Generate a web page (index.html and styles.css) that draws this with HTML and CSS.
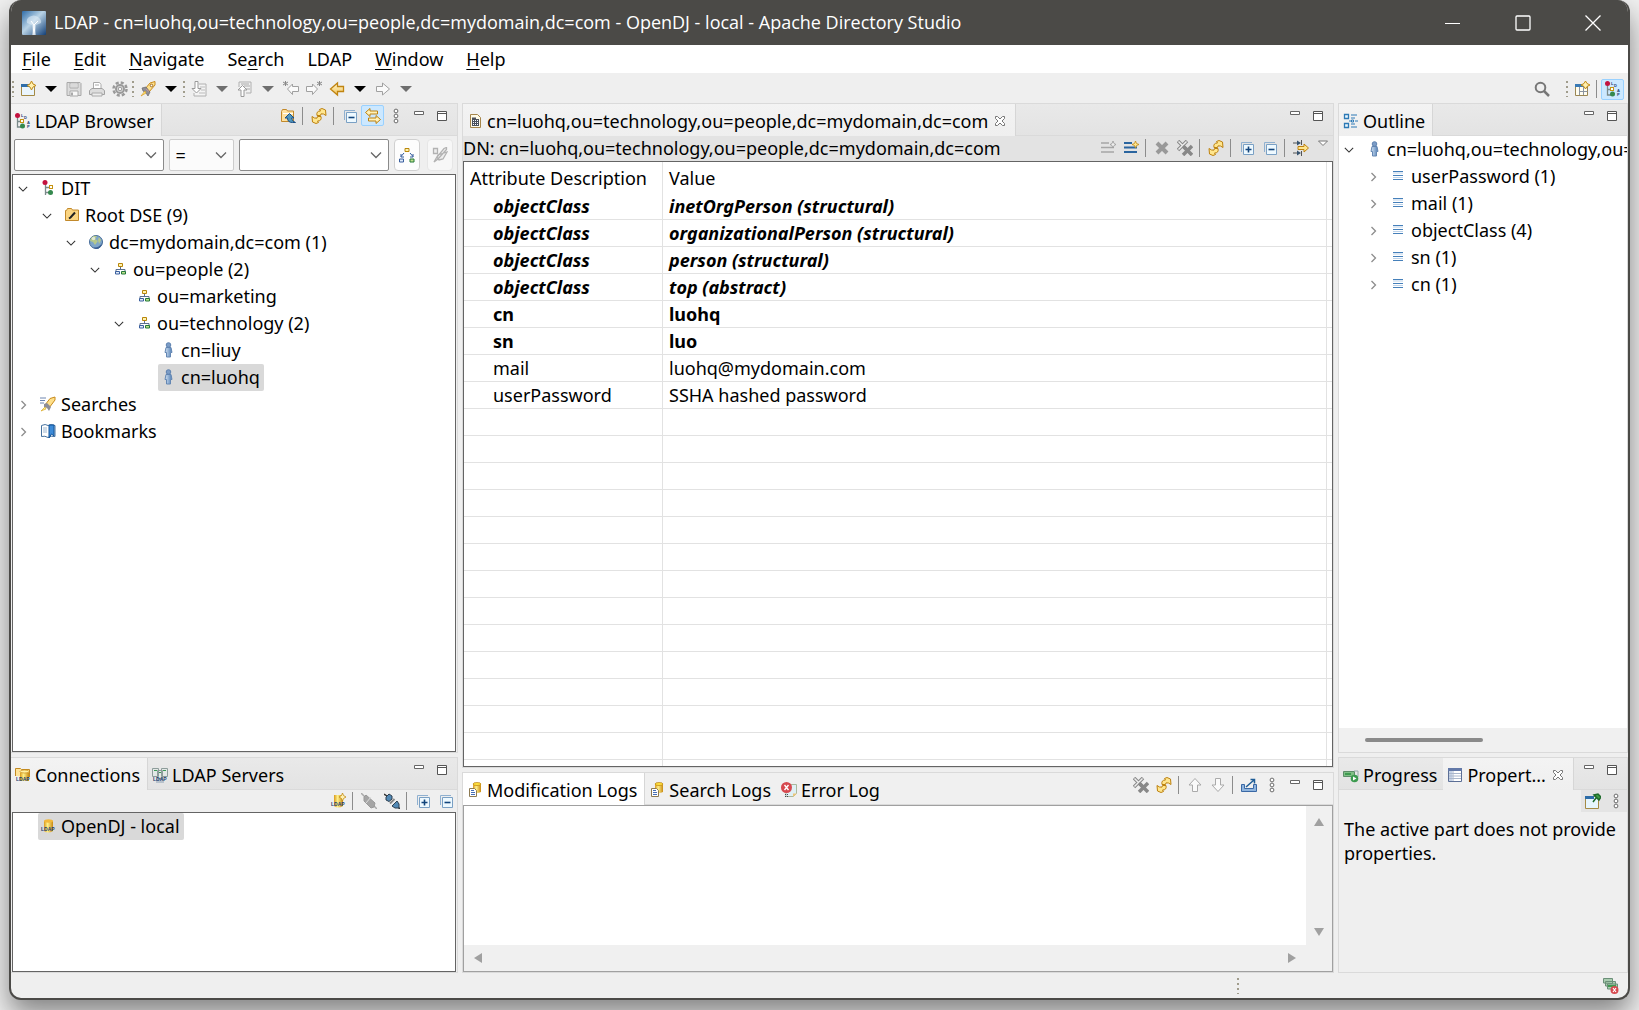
FILE: index.html
```html
<!DOCTYPE html>
<html lang="en">
<head>
    <meta charset="UTF-8">
    <meta name="viewport" content="width=device-width, initial-scale=1.0">
    <title>LDAP - Apache Directory Studio</title>
    <link rel="stylesheet" href="styles.css">
</head>
<body>
    <!-- icon sprite -->
    <svg class="sprite" aria-hidden="true">
        <defs>
            <linearGradient id="gold" x1="0" y1="0" x2="0" y2="1"><stop offset="0" stop-color="#fff6d0"/><stop offset="1" stop-color="#f3c55a"/></linearGradient>
            <linearGradient id="sky" x1="0" y1="0" x2="1" y2="1"><stop offset="0" stop-color="#2f6ca8"/><stop offset=".45" stop-color="#b9d3e6"/><stop offset="1" stop-color="#123f77"/></linearGradient>
            <linearGradient id="blue" x1="0" y1="0" x2="1" y2="0"><stop offset="0" stop-color="#d5e4f4"/><stop offset="1" stop-color="#4f7db4"/></linearGradient>
            <linearGradient id="barrel" x1="0" y1="0" x2="1" y2="0"><stop offset="0" stop-color="#d99a1c"/><stop offset=".4" stop-color="#fff08a"/><stop offset="1" stop-color="#c98a12"/></linearGradient>
        </defs>
        <symbol id="i-app" viewBox="0 0 24 24"><rect width="24" height="24" rx="1" fill="url(#sky)"/><path d="M7 6q5-3 9 0t3 6l-5 2-1 10h-2l-1-10-5-2q-1-4 2-6z" fill="#e4eff7" opacity=".55"/><path d="M11 24l1-10-3-4M13 24l-1-10 4-4" stroke="#fff" fill="none"/></symbol>
        <symbol id="i-new" viewBox="0 0 16 16"><path d="M1.500 3.500h13v11h-13z" fill="#eaf5fd" stroke="#a48a45"/><path d="M1 3h9v3H1z" fill="#2e6da8"/><path d="M11.500 0l1.500 3 3 1.500-3 1.500-1.500 3-1.500-3-3-1.500 3-1.500z" fill="#fff0b0" stroke="#c28a14"/></symbol>
        <symbol id="i-save" viewBox="0 0 16 16"><path d="M1 1.500h13l1 1v12H1z" fill="#dcdcdc" stroke="#a9a9a9"/><path d="M4 2h8v5H4zM4 10h8v5H4z" fill="#f8f8f8" stroke="#aaa"/><path d="M5 11.500h2v3H5z" fill="#aaa"/><path d="M5 4h6M5 6h6" stroke="#bbb"/></symbol>
        <symbol id="i-print" viewBox="0 0 16 16"><path d="M4.500 7V1.500h6l1.500 2V7" fill="#fff" stroke="#aaa"/><path d="M3 7.500h10l2.500 2v4H.500v-4z" fill="#ddd" stroke="#a2a2a2"/><path d="M3 12h10v3H3z" fill="#eee" stroke="#aaa"/><path d="M6 4h4" stroke="#aaa"/></symbol>
        <symbol id="i-gear" viewBox="0 0 16 16"><circle cx="8" cy="8" r="6.500" fill="none" stroke="#999" stroke-width="2.500" stroke-dasharray="3 2.100"/><circle cx="8" cy="8" r="4" fill="#ddd" stroke="#999" stroke-width="2"/><circle cx="8" cy="8" r="1.800" fill="#f6f6f6" stroke="#999"/></symbol>
        <symbol id="i-rocket" viewBox="0 0 16 16"><path d="M5 8l5-6 5-1.500V4l-6 7z" fill="#ffe08a" stroke="#c78a1c"/><path d="M2 7l4-1 4 5-2 4-2-3-3-2z" fill="#8e8e96" stroke="#66646c" stroke-width=".7"/><path d="M5 10l-4 5 5-3z" fill="#ffed76" stroke="#d99a28" stroke-width=".7"/><path d="M6 8l3 2.500" stroke="#c99"/><circle cx="11.500" cy="4.500" r="1.300" fill="#fff" stroke="#9c6a23"/></symbol>
        <symbol id="i-import" viewBox="0 0 16 16"><path d="M8 3h7v12H3v-3" fill="#f4f4f4" stroke="#b0b0b0"/><path d="M4 .500h3v7h3L5.500 12 1 7.500h3z" fill="#fff" stroke="#999"/><path d="M9 6h5M10 9h4M8 12h6" stroke="#bbb"/></symbol>
        <symbol id="i-export" viewBox="0 0 16 16"><path d="M2 6V1h12v11H9" fill="#f0f0f0" stroke="#b0b0b0"/><path d="M4 3h8M7 5h6M9 8h4" stroke="#aaa"/><path d="M4 15.500h3V9h3L5.500 4.500 1 9h3z" fill="#fff" stroke="#999"/></symbol>
        <symbol id="i-back-star" viewBox="0 0 16 16"><path d="M15.500 5.500v5h-6v3L4.500 8l5-5v2.500z" fill="#fafafa" stroke="#a0a0a0"/><path d="M2.500 0v5M0 1l5 3M5 1L0 4" stroke="#888"/></symbol>
        <symbol id="i-fwd-star" viewBox="0 0 16 16"><path d="M.500 5.500v5h6v3l5-5.500-5-5v2.500z" fill="#fafafa" stroke="#a0a0a0"/><path d="M13.500 0v5M11 1l5 3M16 1l-5 3" stroke="#888"/></symbol>
        <symbol id="i-back" viewBox="0 0 16 16"><path d="M14.500 5.500v5h-6v3.500L1.500 8l7-6v3.500z" fill="url(#gold)" stroke="#c08410" stroke-width="1.300"/></symbol>
        <symbol id="i-fwd" viewBox="0 0 16 16"><path d="M1.500 5.500v5h6v3.500l7-6-7-6v3.500z" fill="#fafafa" stroke="#a0a0a0"/></symbol>
        <symbol id="i-tri" viewBox="0 0 12 6"><path d="M0 0h12L6 6z" fill="currentColor"/></symbol>
        <symbol id="i-search" viewBox="0 0 16 16"><circle cx="6.500" cy="6.500" r="4.800" fill="none" stroke="#777" stroke-width="2"/><path d="M10 10l5 5" stroke="#777" stroke-width="2.500"/></symbol>
        <symbol id="i-persp" viewBox="0 0 16 16"><path d="M1.500 3.500h12v11h-12z" fill="#fffdf0" stroke="#9a8653"/><path d="M1 3h9v3H1z" fill="#3a7ab5"/><path d="M5.500 6v8M5.500 10.500h8M9.500 6v8" stroke="#8b94a0"/><path d="M11.500 0l1.500 2.500L16 4l-3 1.500L11.500 8 10 5.500 7 4l3-1.500z" fill="#fff0b0" stroke="#c28a14"/></symbol>
        <symbol id="i-browser" viewBox="0 0 16 16"><path d="M2.500 4v10H7M2.500 8.500h4" fill="none" stroke="#7a8a8a" stroke-width="1.300"/><circle cx="2.500" cy="2.500" r="2.500" fill="#c3123f"/><rect x="5.500" y="6.500" width="3" height="3" fill="#fff" stroke="#c79410"/><circle cx="7.500" cy="13" r="2.500" fill="#35894e"/><text x="6" y="4" class="mini">L</text><text x="9" y="6" class="mini">D</text><text x="12" y="10.600" class="mini">A</text><text x="12" y="15.200" class="mini">P</text></symbol>
        <symbol id="i-folder-up" viewBox="0 0 16 16"><path d="M1.500 13.500v-10l1-2h4l1 1.500h6v10.500z" fill="#ffe2a0" stroke="#c2892b"/><path d="M3 5.500h10" stroke="#fff"/><path d="M9.500 5.500L5 10h2.500q0 4.500 5 4.500h3q-3.500-1-4-4.500H14z" fill="#4f97bd" stroke="#1b4f86"/></symbol>
        <symbol id="i-refresh" viewBox="0 0 16 16"><g fill="#ffe68e" stroke="#bd810e"><path id="swirl" d="M6 7.500Q5 3 9.500 3L8.500 1.500 11 .500 14.500 2l.5 5.500L12.500 6Q9 5 9.500 7.500z"/><use href="#swirl" transform="rotate(180 8 8)"/></g></symbol>
        <symbol id="i-collapse" viewBox="0 0 16 16"><path d="M2.500 12V2.500H13" fill="none" stroke="#8fb0d0"/><path d="M4.500 4.500h10v10h-10z" fill="#eef9ff" stroke="#7aa0c4"/><path d="M6.500 9.500h6" stroke="#12457c" stroke-width="1.600"/></symbol>
        <symbol id="i-expand" viewBox="0 0 16 16"><path d="M2.500 12V2.500H13" fill="none" stroke="#8fb0d0"/><path d="M4.500 4.500h10v10h-10z" fill="#eef9ff" stroke="#7aa0c4"/><path d="M6.500 9.500h6M9.500 6.500v6" stroke="#12457c" stroke-width="1.600"/></symbol>
        <symbol id="i-link" viewBox="0 0 16 16"><path d="M.500 4.500L5 .500v2.500h7.500v3H5V8.500z" fill="#fff1b8" stroke="#bd810e"/><path d="M15.500 11.500L11 7.500V10H3.500v3H11v2.500z" fill="#fff1b8" stroke="#bd810e"/></symbol>
        <symbol id="i-dots" viewBox="0 0 16 16"><g fill="#fff" stroke="#6b6b6b"><circle cx="8" cy="3" r="1.900"/><circle cx="8" cy="8" r="1.900"/><circle cx="8" cy="13" r="1.900"/></g></symbol>
        <symbol id="i-min" viewBox="0 0 16 16"><path d="M3.500 3.500h9v3h-9z" fill="#fff" stroke="#666"/></symbol>
        <symbol id="i-max" viewBox="0 0 16 16"><path d="M3.500 3.500h9v9h-9z" fill="#fff" stroke="#555"/><path d="M3.500 5.500h9" stroke="#555"/></symbol>
        <symbol id="i-down" viewBox="0 0 12 8"><path d="M1 1.500l5 5 5-5" fill="none" stroke="currentColor" stroke-width="1.300"/></symbol>
        <symbol id="i-right" viewBox="0 0 10 10"><path d="M3.500 1l4 4-4 4" fill="none" stroke="currentColor" stroke-width="1.300"/></symbol>
        <symbol id="i-hier" viewBox="0 0 16 16"><path d="M6 1.500h4v3H6z" fill="#fff3b0" stroke="#b8860b"/><path d="M.500 12h4v3h-4z" fill="#dfeaf8" stroke="#3a5f9e"/><path d="M11 12h4v3h-4z" fill="#bfe08a" stroke="#22783a"/><path d="M5 6L2 9.500M2 7v3h3M11 6l3 3.500M14 7v3h-3" fill="none" stroke="#30599a"/></symbol>
        <symbol id="i-edit-off" viewBox="0 0 16 16"><path d="M1.500 1.500h4v5h-4zM6 8l-4 7 4-3 8.500-9.500v-2l-2.500 1L5 10l2 3 4-1 4-7z" fill="#eee" stroke="#b2b2b2" stroke-width="1.300"/></symbol>
        <symbol id="i-dit" viewBox="0 0 16 16"><path d="M5.500 4v11M5.500 7.500h4M5.500 12.500h4" fill="none" stroke="#7a8a8a" stroke-width="1.300"/><circle cx="5" cy="2.500" r="2.500" fill="#c3123f"/><rect x="9.500" y="5.500" width="3" height="3" fill="#fff" stroke="#c79410"/><circle cx="10.500" cy="12.500" r="2.500" fill="#35894e"/></symbol>
        <symbol id="i-dse" viewBox="0 0 16 16"><path d="M1.500 13.500V3.500h1l1-2h4l1 1.500h6v10.500z" fill="#fbd582" stroke="#c2892b"/><path d="M5 11.500l1.500-1L11 5.500" stroke="#222" stroke-width="2" fill="none"/></symbol>
        <symbol id="i-globe" viewBox="0 0 16 16"><circle cx="8" cy="8" r="6.500" fill="#7fa6c9" stroke="#456b98"/><path d="M3 4q3-3 6-2l-2 3 3 2-3 4-2-3-3-1zM11 3l2 3-2 4-1-4z" fill="#b6c98a"/><path d="M4 13q6 2 10-4-1 6-6 6z" fill="#3b5f93"/><circle cx="5.500" cy="4.500" r="1.800" fill="#fff" opacity=".6"/></symbol>
        <symbol id="i-ou" viewBox="0 0 16 16"><path d="M8.500 5v3M4 11V8.500h9V11" fill="none" stroke="#5a6f8e"/><path d="M6.500 2.500h4v3h-4z" fill="#fff3b0" stroke="#b8860b"/><path d="M3.500 10.500h4v2.500h-4z" fill="#dfeaf8" stroke="#3a5f9e"/><path d="M9.500 10.500h4v2.500h-4z" fill="#bfe08a" stroke="#22783a"/></symbol>
        <symbol id="i-person" viewBox="0 0 16 16"><path d="M6 5.500h5l1 5h-1.500v4.500h-4V10.500H5z" fill="url(#blue)" stroke="#6487b3"/><circle cx="8.500" cy="3" r="2.300" fill="#7b9cc6" stroke="#5d81b0"/></symbol>
        <symbol id="i-searches" viewBox="0 0 16 16"><path d="M0 2h6M0 4.500h5M0 7h4" stroke="#6e86b0"/><path d="M5 9l5-6.500 5-1.500V4L9 12z" fill="#ffe08a" stroke="#c78a1c"/><path d="M4 8l3-1 4 4-2 4-2-3-3-1z" fill="#8e8e96"/><path d="M5 11l-4 4 5-2z" fill="#fff38a" stroke="#d9a828" stroke-width=".7"/></symbol>
        <symbol id="i-book" viewBox="0 0 16 16"><path d="M1.500 2.500q4-2 6.500 0 3-2 7 0v11q-4-1-7 1-3-2-6.500-1z" fill="#fff" stroke="#47729f"/><path d="M3 5h4M3 7h4M3 9h4" stroke="#9db6cf"/><path d="M9 2h5v11l-2.500-2L9 15z" fill="#3d8bd8" stroke="#12549a"/></symbol>
        <symbol id="i-entry" viewBox="0 0 16 16"><path d="M3.500 1.500h7l3 3v10h-10z" fill="#fffbe8" stroke="#a5854a"/><path d="M5 4.500h4v1.500h3v7H5z" fill="#4a505c"/><path d="M6 7h1v1H6zM8 7h1v1H8zM10 7h1v1h-1zM6 9h1v1H6zM8 9h1v1H8zM10 9h1v1h-1zM6 11h1v1H6zM8 11h1v1H8zM10 11h1v1h-1z" fill="#fff"/></symbol>
        <symbol id="i-close" viewBox="0 0 16 16"><path d="M3.500 3.500h2L8 6l2.500-2.500h2v2L10 8l2.500 2.500v2h-2L8 10l-2.500 2.500h-2v-2L6 8 3.500 5.500z" fill="#fff" stroke="#777"/></symbol>
        <symbol id="i-val-off" viewBox="0 0 16 16"><path d="M1 3h8M1 7.500h13M1 12h13" stroke="#a6a6a6" stroke-width="1.500"/><path d="M13 1l1 2.500L16 4.500l-2 1L13 8l-1-2.500-2-1 2-1z" fill="#eee" stroke="#999" stroke-width=".8"/></symbol>
        <symbol id="i-val" viewBox="0 0 16 16"><path d="M1 3h8M1 7.500h13M1 12h13" stroke="#2a659f" stroke-width="2"/><path d="M12.500 1l1 2.500 2.500 1-2.500 1-1 2.500-1-2.500-2.500-1 2.500-1z" fill="#ffe58a" stroke="#c28a14" stroke-width=".8"/></symbol>
        <symbol id="i-del" viewBox="0 0 16 16"><path d="M3 3l10 10M13 3L3 13" stroke="#999" stroke-width="4"/></symbol>
        <symbol id="i-del-all" viewBox="0 0 16 16"><path d="M1 1l9 9M10 1L1 10" stroke="#888" stroke-width="3.500"/><path d="M1.500 1.500l8 8M9.500 1.500l-8 8" stroke="#eee" stroke-width="1.500"/><path d="M6 6l9 9M15 6l-9 9" stroke="#888" stroke-width="3.500"/></symbol>
        <symbol id="i-filter" viewBox="0 0 16 16"><path d="M0 3h6M0 13h6M8.500 0v5M8.500 11v5" stroke="#555"/><path d="M4 0.500v5L8 3zM4 10.500v5l4-2.500z" fill="#36536f"/><path d="M5 6.500h6V4l4.500 4L11 12V9.500H5z" fill="#ffe68e" stroke="#bd810e"/></symbol>
        <symbol id="i-menu" viewBox="0 0 16 16"><path d="M3.500 1h9L8 5.500z" fill="#fff" stroke="#777"/></symbol>
        <symbol id="i-outline" viewBox="0 0 16 16"><path d="M1.500 1.500h4v4h-4zM1.500 10.500h4v4h-4z" fill="#eaf7ff" stroke="#2c79b5" stroke-width="1.300"/><path d="M8 2h6M8 5h4M8 11h4M8 14h6M6 8h2M12 8h3" stroke="#2c79b5"/><path d="M8.500 7h2v2h-2z" fill="#fff" stroke="#2c79b5"/></symbol>
        <symbol id="i-attr" viewBox="0 0 16 16"><path d="M3 3.500h10M3 7.500h10M3 11.500h10" stroke="#4680ba" stroke-width="1.200"/><path d="M3 5h10M3 9.500h10" stroke="#bdd3ea"/></symbol>
        <symbol id="i-conns" viewBox="0 0 16 16"><path d="M.500 9V1.500h5l1 1h8V10" fill="#ffe39a" stroke="#c28a22"/><path d="M5 4h9v10H5z" fill="url(#barrel)"/><ellipse cx="9.500" cy="4.500" rx="4.500" ry="1.500" fill="#fff1a5" stroke="#c98a12" stroke-width=".7"/><text x="1" y="14" class="tiny">LDAP</text></symbol>
        <symbol id="i-servers" viewBox="0 0 16 16"><path d="M.500 1.500h6v8h-6zM5.500 3.500h5v8h-5zM9.500 1.500h6v8h-6z" fill="#e3e8e6" stroke="#8d9c9a"/><path d="M2 3.500h3M11 3.500h3M7 5.500h2" stroke="#3a9a55"/><path d="M4 12h8v4H4z" fill="#b8c2cc"/><text x="1" y="14" class="tiny">LDAP</text></symbol>
        <symbol id="i-conn" viewBox="0 0 16 16"><path d="M4 3v10q4 3 9 0V3z" fill="url(#barrel)"/><ellipse cx="8.500" cy="3" rx="4.500" ry="1.700" fill="#f2b83a"/><text x="1" y="13" class="tiny">LDAP</text></symbol>
        <symbol id="i-conn-new" viewBox="0 0 16 16"><path d="M4 2v11q4 3 9 0V2z" fill="url(#barrel)"/><path d="M12.500 0l1 2.500L16 4l-2.500 1.500-1 2.500-1-2.500L9 4l2.500-1.500z" fill="#fff0b0" stroke="#c28a14" stroke-width=".8"/><text x="1" y="13" class="tiny">LDAP</text></symbol>
        <symbol id="i-plug-off" viewBox="0 0 16 16"><path d="M0 0l4 4M12 12l4 4" stroke="#aaa" stroke-width="1.500"/><path d="M3 4l2-2 9 8-1 4-3 1-7-7z" fill="#a5a5a5" stroke="#999"/><path d="M5 10l5-6" stroke="#ddd"/></symbol>
        <symbol id="i-plug" viewBox="0 0 16 16"><path d="M0 1l3 2M13 13l3 3" stroke="#333" stroke-width="1.500"/><path d="M2 4l3-3 3 2v3L5 8.500 2 7z" fill="#5289b5" stroke="#2d3f50"/><path d="M8 13l5-5 2 3v4h-4z" fill="#5289b5" stroke="#2d3f50"/><path d="M6 10.500L10.500 6" stroke="#888" stroke-width="2"/></symbol>
        <symbol id="i-log" viewBox="0 0 16 16"><path d="M6 2v8q4 2 8 0V2z" fill="url(#barrel)"/><ellipse cx="10" cy="2" rx="4" ry="1.500" fill="#ffe23e" stroke="#b97c10" stroke-width=".7"/><path d="M2.500 6.500h5l2 2v6h-7z" fill="#fff" stroke="#8d7a52"/><path d="M4 8.500h3M4 10.500h4M4 12.500h4" stroke="#466fb5"/></symbol>
        <symbol id="i-err" viewBox="0 0 16 16"><path d="M7 2.500h8.500v9l-3 3H5V9z" fill="#dff0f5" stroke="#a9b99e"/><path d="M12 15v-3.500h4z" fill="#ecc67a"/><circle cx="5.500" cy="5.500" r="5.500" fill="#d6494f"/><path d="M3.500 3l4 5M7.500 3l-4 5" stroke="#fff" stroke-width="1.400"/><path d="M4 12.500h3M4 14.500h3" stroke="#445" stroke-dasharray="1 1"/></symbol>
        <symbol id="i-up" viewBox="0 0 16 16"><path d="M5.500 14.500h5V8h3.500L8 1.500 2 8h3.500z" fill="#fafafa" stroke="#aaa"/></symbol>
        <symbol id="i-dn" viewBox="0 0 16 16"><path d="M5.500 1.500h5V8h3.500L8 14.500 2 8h3.500z" fill="#fafafa" stroke="#aaa"/></symbol>
        <symbol id="i-out" viewBox="0 0 16 16"><path d="M.500 7.500h3v4h9v-4h3v7H.500z" fill="#8fb4dd" stroke="#3a68a5"/><path d="M5 10l8-7M9.500 2.500h4v4" fill="none" stroke="#1e5c96" stroke-width="1.500"/></symbol>
        <symbol id="i-progress" viewBox="0 0 16 16"><path d="M.500 4.500h11v5H.500z" fill="#7fbf85" stroke="#5c8c68"/><path d="M2 6h6v2H2z" fill="#3f9a50"/><path d="M11 4h4v6" fill="none" stroke="#9aa"/><circle cx="11.500" cy="11.500" r="3.800" fill="#3c9a4f"/><path d="M10 9.500v4l3.500-2z" fill="#fff"/></symbol>
        <symbol id="i-props" viewBox="0 0 16 16"><path d="M1.500 1.500h13v13h-13z" fill="#fff" stroke="#5c6f96"/><path d="M1 1h14v3H1z" fill="#6379a8"/><path d="M2 4h3v10H2z" fill="#c5d2e6"/><path d="M2 6.500h12M2 9h12M2 11.500h12M6 4v10" stroke="#a9b6cc"/></symbol>
        <symbol id="i-pin" viewBox="0 0 16 16"><path d="M.500 3.500h13v12H.500z" fill="#e6f5fd" stroke="#a48a45"/><path d="M0 3h9v3H0z" fill="#2e6da8"/><path d="M8 9l3-4M9 2l5 5 2-3-3-3z" stroke="#1d6b2a" stroke-width="1.500" fill="#3d9a43"/></symbol>
        <symbol id="i-jobs" viewBox="0 0 16 16"><path d="M.500 5V.500h9v5zM2.500 8V3.500h10v5zM4.500 11V6h10v5z" fill="#a9cdb0" stroke="#6b8f78"/><path d="M5 7h8v2H5z" fill="#3f9a50"/><circle cx="11.500" cy="12" r="4" fill="#d6494f"/><path d="M10 10l3 4M13 10l-3 4" stroke="#fff" stroke-width="1.200"/></symbol>
    </svg>

    <div class="window">
        <header class="titlebar">
            <svg class="app-icon"><use href="#i-app"/></svg>
            <h1>LDAP - cn=luohq,ou=technology,ou=people,dc=mydomain,dc=com - OpenDJ - local - Apache Directory Studio</h1>
            <button class="win-btn" aria-label="Minimize"><svg viewBox="0 0 16 16"><path d="M0 8.500h15" stroke="#fff"/></svg></button>
            <button class="win-btn" aria-label="Maximize"><svg viewBox="0 0 16 16"><rect x="1" y="1" width="14" height="14" rx="1" fill="none" stroke="#fff" stroke-width="1.300"/></svg></button>
            <button class="win-btn" aria-label="Close"><svg viewBox="0 0 16 16"><path d="M.500.500l15 15M15.500.500l-15 15" stroke="#fff" stroke-width="1.300"/></svg></button>
        </header>

        <nav class="menubar">
            <button><u>F</u>ile</button>
            <button><u>E</u>dit</button>
            <button><u>N</u>avigate</button>
            <button>Se<u>a</u>rch</button>
            <button>LDAP</button>
            <button><u>W</u>indow</button>
            <button><u>H</u>elp</button>
        </nav>

        <div class="toolbar main-toolbar">
            <span class="grip"></span>
            <button class="tool" aria-label="New"><svg><use href="#i-new"/></svg></button>
            <button class="tool arrow" aria-label="New menu"><svg><use href="#i-tri"/></svg></button>
            <button class="tool" aria-label="Save" disabled><svg><use href="#i-save"/></svg></button>
            <button class="tool" aria-label="Print" disabled><svg><use href="#i-print"/></svg></button>
            <button class="tool" aria-label="Build" disabled><svg><use href="#i-gear"/></svg></button>
            <span class="grip"></span>
            <button class="tool" aria-label="Search"><svg><use href="#i-rocket"/></svg></button>
            <button class="tool arrow" aria-label="Search menu"><svg><use href="#i-tri"/></svg></button>
            <span class="grip"></span>
            <button class="tool" aria-label="Next annotation" disabled><svg><use href="#i-import"/></svg></button>
            <button class="tool arrow" aria-label="Next annotation menu" disabled><svg><use href="#i-tri"/></svg></button>
            <button class="tool" aria-label="Previous annotation" disabled><svg><use href="#i-export"/></svg></button>
            <button class="tool arrow" aria-label="Previous annotation menu" disabled><svg><use href="#i-tri"/></svg></button>
            <button class="tool" aria-label="Last edit location" disabled><svg><use href="#i-back-star"/></svg></button>
            <button class="tool" aria-label="Next edit location" disabled><svg><use href="#i-fwd-star"/></svg></button>
            <button class="tool" aria-label="Back"><svg><use href="#i-back"/></svg></button>
            <button class="tool arrow" aria-label="Back menu"><svg><use href="#i-tri"/></svg></button>
            <button class="tool" aria-label="Forward" disabled><svg><use href="#i-fwd"/></svg></button>
            <button class="tool arrow" aria-label="Forward menu" disabled><svg><use href="#i-tri"/></svg></button>
            <span class="spacer"></span>
            <button class="tool quick" aria-label="Quick access"><svg><use href="#i-search"/></svg></button>
            <span class="grip"></span>
            <button class="tool" aria-label="Open perspective"><svg><use href="#i-persp"/></svg></button>
            <span class="sep"></span>
            <button class="tool pressed" aria-label="LDAP perspective"><svg><use href="#i-browser"/></svg></button>
        </div>

        <main class="workbench">
            <div class="column col-left">
                <section class="view">
                    <div class="tabs">
                        <button class="tab active"><svg><use href="#i-browser"/></svg>LDAP Browser</button>
                        <div class="toolbar">
                            <button class="tool" aria-label="Up"><svg><use href="#i-folder-up"/></svg></button>
                            <span class="sep"></span>
                            <button class="tool" aria-label="Refresh"><svg><use href="#i-refresh"/></svg></button>
                            <span class="sep"></span>
                            <button class="tool" aria-label="Collapse all"><svg><use href="#i-collapse"/></svg></button>
                            <button class="tool pressed" aria-label="Link with editor"><svg><use href="#i-link"/></svg></button>
                            <button class="tool" aria-label="View menu"><svg><use href="#i-dots"/></svg></button>
                            <button class="tool" aria-label="Minimize view"><svg><use href="#i-min"/></svg></button>
                            <button class="tool" aria-label="Maximize view"><svg><use href="#i-max"/></svg></button>
                        </div>
                    </div>
                    <div class="filter">
                        <label class="combo wide"><select aria-label="Attribute"><option></option></select><svg><use href="#i-down"/></svg></label>
                        <label class="combo narrow"><select aria-label="Operator"><option>=</option></select><svg><use href="#i-down"/></svg></label>
                        <label class="combo wide"><select aria-label="Value"><option></option></select><svg><use href="#i-down"/></svg></label>
                        <button class="filter-btn" aria-label="Subtree search"><svg><use href="#i-hier"/></svg></button>
                        <button class="filter-btn" aria-label="Quick search" disabled><svg><use href="#i-edit-off"/></svg></button>
                    </div>
                    <ul class="tree boxed">
                        <li class="open"><div class="node"><svg class="chev"><use href="#i-down"/></svg><span><svg><use href="#i-dit"/></svg>DIT</span></div>
                            <ul>
                                <li class="open"><div class="node"><svg class="chev"><use href="#i-down"/></svg><span><svg><use href="#i-dse"/></svg>Root DSE (9)</span></div>
                                    <ul>
                                        <li class="open"><div class="node"><svg class="chev"><use href="#i-down"/></svg><span><svg><use href="#i-globe"/></svg>dc=mydomain,dc=com (1)</span></div>
                                            <ul>
                                                <li class="open"><div class="node"><svg class="chev"><use href="#i-down"/></svg><span><svg><use href="#i-ou"/></svg>ou=people (2)</span></div>
                                                    <ul>
                                                        <li><div class="node"><svg class="chev"></svg><span><svg><use href="#i-ou"/></svg>ou=marketing</span></div></li>
                                                        <li class="open"><div class="node"><svg class="chev"><use href="#i-down"/></svg><span><svg><use href="#i-ou"/></svg>ou=technology (2)</span></div>
                                                            <ul>
                                                                <li><div class="node"><svg class="chev"></svg><span><svg><use href="#i-person"/></svg>cn=liuy</span></div></li>
                                                                <li><div class="node"><svg class="chev"></svg><span class="selected"><svg><use href="#i-person"/></svg>cn=luohq</span></div></li>
                                                            </ul>
                                                        </li>
                                                    </ul>
                                                </li>
                                            </ul>
                                        </li>
                                    </ul>
                                </li>
                            </ul>
                        </li>
                        <li><div class="node"><svg class="chev"><use href="#i-right"/></svg><span><svg><use href="#i-searches"/></svg>Searches</span></div></li>
                        <li><div class="node"><svg class="chev"><use href="#i-right"/></svg><span><svg><use href="#i-book"/></svg>Bookmarks</span></div></li>
                    </ul>
                </section>

                <section class="view">
                    <div class="tabs">
                        <button class="tab active"><svg><use href="#i-conns"/></svg>Connections</button>
                        <button class="tab"><svg><use href="#i-servers"/></svg>LDAP Servers</button>
                        <div class="toolbar">
                            <button class="tool" aria-label="Minimize view"><svg><use href="#i-min"/></svg></button>
                            <button class="tool" aria-label="Maximize view"><svg><use href="#i-max"/></svg></button>
                        </div>
                    </div>
                    <div class="toolbar view-toolbar">
                        <button class="tool" aria-label="New connection"><svg><use href="#i-conn-new"/></svg></button>
                        <span class="sep"></span>
                        <button class="tool" aria-label="Open connection" disabled><svg><use href="#i-plug-off"/></svg></button>
                        <button class="tool" aria-label="Close connection"><svg><use href="#i-plug"/></svg></button>
                        <span class="sep"></span>
                        <button class="tool" aria-label="Expand all"><svg><use href="#i-expand"/></svg></button>
                        <button class="tool" aria-label="Collapse all"><svg><use href="#i-collapse"/></svg></button>
                    </div>
                    <ul class="tree boxed">
                        <li><div class="node"><svg class="chev"></svg><span class="selected"><svg><use href="#i-conn"/></svg>OpenDJ - local</span></div></li>
                    </ul>
                </section>
            </div>

            <div class="column col-center">
                <section class="view editor">
                    <div class="tabs">
                        <button class="tab active"><svg><use href="#i-entry"/></svg>cn=luohq,ou=technology,ou=people,dc=mydomain,dc=com<svg><use href="#i-close"/></svg></button>
                        <div class="toolbar">
                            <button class="tool" aria-label="Minimize editor"><svg><use href="#i-min"/></svg></button>
                            <button class="tool" aria-label="Maximize editor"><svg><use href="#i-max"/></svg></button>
                        </div>
                    </div>
                    <div class="dn-bar">
                        <p>DN: cn=luohq,ou=technology,ou=people,dc=mydomain,dc=com</p>
                        <div class="toolbar">
                            <button class="tool" aria-label="New value" disabled><svg><use href="#i-val-off"/></svg></button>
                            <button class="tool" aria-label="New attribute"><svg><use href="#i-val"/></svg></button>
                            <span class="sep"></span>
                            <button class="tool" aria-label="Delete" disabled><svg><use href="#i-del"/></svg></button>
                            <button class="tool" aria-label="Delete all" disabled><svg><use href="#i-del-all"/></svg></button>
                            <span class="sep"></span>
                            <button class="tool" aria-label="Refresh"><svg><use href="#i-refresh"/></svg></button>
                            <span class="sep"></span>
                            <button class="tool" aria-label="Expand all"><svg><use href="#i-expand"/></svg></button>
                            <button class="tool" aria-label="Collapse all"><svg><use href="#i-collapse"/></svg></button>
                            <span class="sep"></span>
                            <button class="tool" aria-label="Quick filter"><svg><use href="#i-filter"/></svg></button>
                            <button class="tool" aria-label="View menu"><svg><use href="#i-menu"/></svg></button>
                        </div>
                    </div>
                    <div class="table-box">
                        <table>
                            <thead>
                                <tr><th>Attribute Description</th><th>Value</th><th></th></tr>
                            </thead>
                            <tbody>
                                <tr class="oc"><td>objectClass</td><td>inetOrgPerson (structural)</td><td></td></tr>
                                <tr class="oc"><td>objectClass</td><td>organizationalPerson (structural)</td><td></td></tr>
                                <tr class="oc"><td>objectClass</td><td>person (structural)</td><td></td></tr>
                                <tr class="oc"><td>objectClass</td><td>top (abstract)</td><td></td></tr>
                                <tr class="must"><td>cn</td><td>luohq</td><td></td></tr>
                                <tr class="must"><td>sn</td><td>luo</td><td></td></tr>
                                <tr><td>mail</td><td>luohq@mydomain.com</td><td></td></tr>
                                <tr><td>userPassword</td><td>SSHA hashed password</td><td></td></tr>
                                <tr><td></td><td></td><td></td></tr>
                                <tr><td></td><td></td><td></td></tr>
                                <tr><td></td><td></td><td></td></tr>
                                <tr><td></td><td></td><td></td></tr>
                                <tr><td></td><td></td><td></td></tr>
                                <tr><td></td><td></td><td></td></tr>
                                <tr><td></td><td></td><td></td></tr>
                                <tr><td></td><td></td><td></td></tr>
                                <tr><td></td><td></td><td></td></tr>
                                <tr><td></td><td></td><td></td></tr>
                                <tr><td></td><td></td><td></td></tr>
                                <tr><td></td><td></td><td></td></tr>
                                <tr><td></td><td></td><td></td></tr>
                                <tr><td></td><td></td><td></td></tr>
                            </tbody>
                        </table>
                    </div>
                </section>

                <section class="view logs">
                    <div class="tabs">
                        <button class="tab active"><svg><use href="#i-log"/></svg>Modification Logs</button>
                        <button class="tab"><svg><use href="#i-log"/></svg>Search Logs</button>
                        <button class="tab"><svg><use href="#i-err"/></svg>Error Log</button>
                        <div class="toolbar">
                            <button class="tool" aria-label="Clear" disabled><svg><use href="#i-del-all"/></svg></button>
                            <button class="tool" aria-label="Refresh"><svg><use href="#i-refresh"/></svg></button>
                            <span class="sep"></span>
                            <button class="tool" aria-label="Older" disabled><svg><use href="#i-up"/></svg></button>
                            <button class="tool" aria-label="Newer" disabled><svg><use href="#i-dn"/></svg></button>
                            <span class="sep"></span>
                            <button class="tool" aria-label="Export"><svg><use href="#i-out"/></svg></button>
                            <button class="tool" aria-label="View menu"><svg><use href="#i-dots"/></svg></button>
                            <button class="tool" aria-label="Minimize view"><svg><use href="#i-min"/></svg></button>
                            <button class="tool" aria-label="Maximize view"><svg><use href="#i-max"/></svg></button>
                        </div>
                    </div>
                    <div class="log-box">
                        <textarea aria-label="Modification log" readonly></textarea>
                        <div class="vscroll">
                            <svg viewBox="0 0 12 10"><path d="M6 1l5 8H1z"/></svg>
                            <svg viewBox="0 0 12 10"><path d="M1 1h10L6 9z"/></svg>
                        </div>
                        <div class="hscroll">
                            <svg viewBox="0 0 10 12"><path d="M9 1v10L1 6z"/></svg>
                            <svg viewBox="0 0 10 12"><path d="M1 1v10l8-5z"/></svg>
                        </div>
                    </div>
                </section>
            </div>

            <div class="column col-right">
                <section class="view outline">
                    <div class="tabs">
                        <button class="tab active"><svg><use href="#i-outline"/></svg>Outline</button>
                        <div class="toolbar">
                            <button class="tool" aria-label="Minimize view"><svg><use href="#i-min"/></svg></button>
                            <button class="tool" aria-label="Maximize view"><svg><use href="#i-max"/></svg></button>
                        </div>
                    </div>
                    <ul class="tree">
                        <li class="open"><div class="node"><svg class="chev"><use href="#i-down"/></svg><span><svg><use href="#i-person"/></svg>cn=luohq,ou=technology,ou=people,dc=mydomain,dc=com</span></div>
                            <ul>
                                <li><div class="node"><svg class="chev"><use href="#i-right"/></svg><span><svg><use href="#i-attr"/></svg>userPassword (1)</span></div></li>
                                <li><div class="node"><svg class="chev"><use href="#i-right"/></svg><span><svg><use href="#i-attr"/></svg>mail (1)</span></div></li>
                                <li><div class="node"><svg class="chev"><use href="#i-right"/></svg><span><svg><use href="#i-attr"/></svg>objectClass (4)</span></div></li>
                                <li><div class="node"><svg class="chev"><use href="#i-right"/></svg><span><svg><use href="#i-attr"/></svg>sn (1)</span></div></li>
                                <li><div class="node"><svg class="chev"><use href="#i-right"/></svg><span><svg><use href="#i-attr"/></svg>cn (1)</span></div></li>
                            </ul>
                        </li>
                    </ul>
                    <div class="scrollbar"><div class="thumb"></div></div>
                </section>

                <section class="view">
                    <div class="tabs">
                        <button class="tab"><svg><use href="#i-progress"/></svg>Progress</button>
                        <button class="tab active"><svg><use href="#i-props"/></svg>Propert...<svg><use href="#i-close"/></svg></button>
                        <div class="toolbar">
                            <button class="tool" aria-label="Minimize view"><svg><use href="#i-min"/></svg></button>
                            <button class="tool" aria-label="Maximize view"><svg><use href="#i-max"/></svg></button>
                        </div>
                    </div>
                    <div class="toolbar view-toolbar shaded">
                        <button class="tool" aria-label="Pin view"><svg><use href="#i-pin"/></svg></button>
                        <button class="tool" aria-label="View menu"><svg><use href="#i-dots"/></svg></button>
                    </div>
                    <p class="message">The active part does not provide properties.</p>
                </section>
            </div>
        </main>

        <footer class="statusbar">
            <span class="grip"></span>
            <button class="tool" aria-label="Background jobs"><svg><use href="#i-jobs"/></svg></button>
        </footer>
    </div>
</body>
</html>
```
FILE: styles.css
```css
* {
    box-sizing: border-box;
}
body {
    margin: 0;
    height: 100vh;
    overflow: hidden;
    background: #f0f0f0;
    font-family: "Noto Sans", "Open Sans", sans-serif;
    font-size: 18px;
    line-height: 24px;
    color: #000;
}
button, select, textarea {
    font: inherit;
    color: inherit;
    margin: 0;
    padding: 0;
    border: 0;
    background: none;
}
ul {
    list-style: none;
    margin: 0;
    padding: 0;
}
h1, p {
    margin: 0;
    font-size: inherit;
    font-weight: normal;
}
svg {
    display: block;
    flex: none;
}
.sprite {
    position: absolute;
    width: 0;
    height: 0;
}
.tiny {
    font: bold 5px "Liberation Sans", sans-serif;
    fill: #1d3f72;
}
.mini {
    font: bold 4px "Liberation Sans", sans-serif;
    fill: #1d3f72;
}

/* window frame */
.window {
    display: flex;
    flex-direction: column;
    height: calc(100vh - 10px);
    margin: 0 9px;
    border: 2px solid #4b4a47;
    border-top: 0;
    border-radius: 12px;
    overflow: hidden;
    background: #efefef;
    box-shadow: 0 14px 28px rgba(0, 0, 0, 0.45);
}
.titlebar {
    display: flex;
    align-items: center;
    height: 45px;
    padding-left: 11px;
    background: #4b4a47;
    color: #fff;
}
.titlebar h1 {
    flex: 1;
    margin-left: 8px;
    padding-bottom: 2px;
    font-family: "Open Sans", "Noto Sans", sans-serif;
    white-space: nowrap;
}
.app-icon {
    width: 24px;
    height: 24px;
}
.win-btn {
    display: flex;
    justify-content: center;
    align-items: center;
    width: 70px;
    height: 45px;
}
.win-btn svg {
    width: 16px;
    height: 16px;
}
.menubar {
    display: flex;
    height: 28px;
    background: #fff;
}
.menubar button {
    padding: 0 12px 0 11px;
}
.menubar u {
    text-decoration-thickness: 1px;
    text-underline-offset: 3px;
}

/* toolbars */
.toolbar {
    display: flex;
    align-items: center;
    height: 23px;
}
.tool {
    display: flex;
    justify-content: center;
    align-items: center;
    width: 23px;
    height: 21px;
}
.tool svg {
    width: 16px;
    height: 16px;
}
.tool.arrow svg {
    width: 12px;
    height: 6px;
}
.tool.arrow:disabled {
    color: #6e6e6e;
}
.tool.pressed {
    background: #cce8ff;
    border: 1px solid #99d1ff;
    border-radius: 2px;
}
.quick {
    margin-right: 12px;
}
.sep {
    width: 1px;
    height: 18px;
    margin: 0 4px 0 3px;
    background: #8c8c8c;
}
.grip {
    width: 2px;
    height: 16px;
    margin: 0 2px 0 1px;
    background: repeating-linear-gradient(#a09c8c 0 2px, transparent 2px 5px);
}
.spacer {
    flex: 1;
}
.main-toolbar {
    height: 30px;
    padding: 2px 4px 0 0;
}

/* workbench */
.workbench {
    display: grid;
    grid-template-columns: 447fr 872fr 290fr;
    gap: 4px;
    flex: 1;
    min-height: 0;
}
.column {
    display: grid;
    grid-template-rows: 650fr 216fr;
    gap: 4px;
    min-width: 0;
    min-height: 0;
}
.col-center {
    grid-template-rows: 665fr 201fr;
}
.view {
    display: flex;
    flex-direction: column;
    min-width: 0;
    min-height: 0;
    border: 1px solid #dadada;
    border-left: 0;
}
.col-center .view,
.col-right .view {
    border-left: 1px solid #dadada;
}
.tabs {
    display: flex;
    height: 32px;
    flex: none;
    background: linear-gradient(#e9e9e9, #e3e3e3);
    box-shadow: inset 0 -1px #dadada;
}
.tabs .toolbar {
    margin-left: auto;
    padding-right: 4px;
}
.tab {
    display: flex;
    align-items: center;
    gap: 4px;
    padding: 2px 6px 0 4px;
    white-space: nowrap;
}
.tab svg {
    width: 16px;
    height: 16px;
}
.tab.active {
    padding-right: 7px;
    background: linear-gradient(#f3f3f3, #efefef);
    border-right: 1px solid #d6d6d6;
}
.view-toolbar {
    justify-content: flex-end;
    flex: none;
    height: 22px;
}
.shaded {
    align-self: flex-end;
    background: #e4e4e4;
}

/* quick filter row */
.filter {
    display: flex;
    gap: 5px;
    height: 38px;
    padding: 3px 4px 3px 3px;
}
.combo {
    display: grid;
    align-items: center;
}
.combo select,
.combo svg {
    grid-area: 1 / 1;
}
.combo select {
    appearance: none;
    width: 100%;
    height: 32px;
    padding-left: 5px;
    border: 1px solid #8a8a8a;
    border-radius: 2px;
    background: #fff;
}
.combo svg {
    justify-self: end;
    width: 12px;
    height: 8px;
    margin-right: 7px;
    color: #666;
    pointer-events: none;
}
.wide {
    flex: 150;
}
.narrow {
    flex: 64;
}
.narrow select {
    border-color: #ccc;
    background: #fbfbfb;
}
.filter-btn {
    display: flex;
    justify-content: center;
    align-items: center;
    width: 26px;
    height: 32px;
    border: 1px solid #d0d0d0;
    border-radius: 4px;
    background: #fdfdfd;
}
.filter-btn:disabled {
    margin-left: 2px;
    border-color: #e6e6e6;
    background: #f7f7f7;
}
.filter-btn svg {
    width: 16px;
    height: 16px;
}

/* trees */
.tree {
    flex: 1;
    min-height: 0;
    overflow: hidden;
}
.tree.boxed {
    margin: 0 1px;
    border: 1px solid #646464;
    background: #fff;
}
.tree ul {
    padding-left: 24px;
}
.node {
    display: flex;
    align-items: center;
    height: 27px;
    white-space: nowrap;
}
.node span {
    display: flex;
    align-items: center;
    gap: 5px;
    height: 27px;
    padding: 0 4px 2px 2px;
    border-radius: 2px;
}
.node span svg {
    width: 16px;
    height: 16px;
}
.chev {
    width: 10px;
    height: 10px;
    margin: 0 10px 0 5px;
    color: #333;
}
li:not(.open) > .node .chev {
    color: #8c8c8c;
}
.selected {
    background: #d9d9d9;
}
.outline .tree {
    background: #fff;
}

.scrollbar {
    height: 24px;
    padding: 10px 26px;
    background: #f0f0f0;
}
.thumb {
    width: 50%;
    height: 4px;
    border-radius: 2px;
    background: #8a8a8a;
}

/* entry editor */
.dn-bar {
    display: flex;
    align-items: center;
    justify-content: space-between;
    height: 25px;
    padding-bottom: 2px;
    background: #e3e3e3;
}
.dn-bar .tool:last-child {
    width: 21px;
}
.table-box {
    flex: 1;
    min-height: 0;
    overflow: hidden;
    border: 1px solid #646464;
    background: #fff;
}
table {
    width: 100%;
    border-collapse: separate;
    border-spacing: 0;
    table-layout: fixed;
}
th, td {
    height: 27px;
    padding: 0 6px;
    border-right: 1px solid #e2e2e2;
    border-bottom: 1px solid #e2e2e2;
    text-align: left;
    white-space: nowrap;
}
th {
    height: 31px;
    border-bottom: 0;
    font-weight: normal;
}
th:nth-child(1) {
    width: 199px;
}
th:nth-child(3) {
    width: 5px;
}
td:first-child {
    padding-left: 29px;
}
th:last-child,
td:last-child {
    padding: 0;
    border-right: 0;
}
.oc {
    font-weight: bold;
    font-style: italic;
}
.must {
    font-weight: bold;
}

/* logs */
.logs .tabs {
    background: #f0f0f0;
}
.logs .tab.active {
    background: #fff;
}
.log-box {
    display: grid;
    grid-template-columns: 1fr 26px;
    grid-template-rows: 1fr 26px;
    flex: 1;
    min-height: 0;
    border: 1px solid #a0a0a0;
    background: #f0f0f0;
}
.log-box textarea {
    width: 100%;
    height: 100%;
    background: #fff;
    resize: none;
}
.log-box svg {
    width: 12px;
    height: 12px;
    fill: #a0a0a0;
}
.vscroll {
    display: flex;
    flex-direction: column;
    justify-content: space-between;
    align-items: center;
    padding: 10px 0 7px;
}
.hscroll {
    display: flex;
    justify-content: space-between;
    align-items: center;
    padding: 0 8px;
}

.message {
    padding: 5px;
}

.statusbar {
    display: flex;
    align-items: center;
    justify-content: flex-end;
    height: 25px;
    padding-right: 6px;
}
.statusbar .grip {
    margin-right: 360px;
}
```
